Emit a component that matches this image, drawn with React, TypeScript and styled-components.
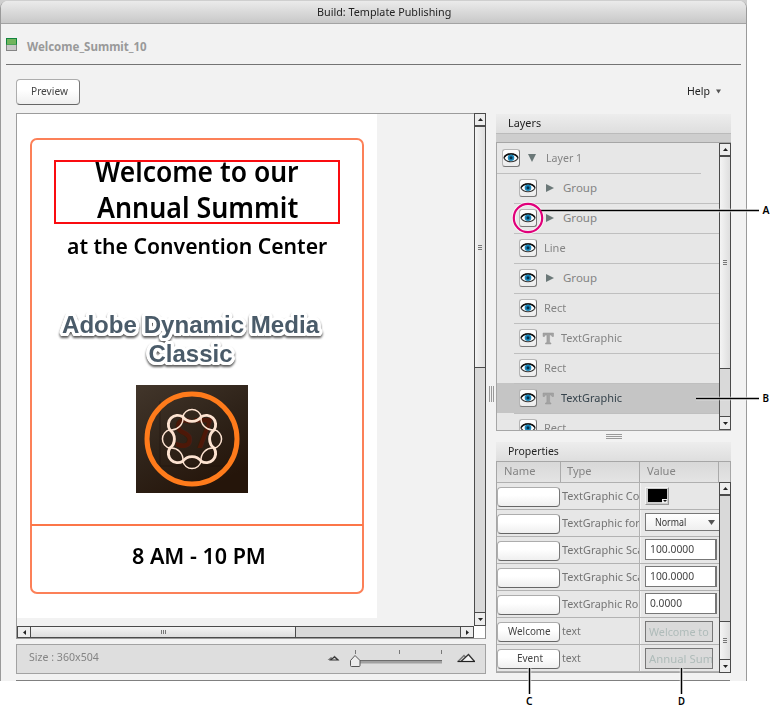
import React, { useLayoutEffect, useRef } from 'react';
import styled, { createGlobalStyle, css } from 'styled-components';

const GlobalStyle = createGlobalStyle`
  *, *::before, *::after { box-sizing: border-box; }
  body { margin: 0; background: #fff; overflow: hidden; }
`;

const UI_FONT = '"Noto Sans", "Open Sans", sans-serif';

/* ---------- text whose glyphs are condensed to a given width ---------- */

const FitBox = styled.span`
  display: inline-block;
  flex: none;
  white-space: pre;
  text-align: left;
`;
const FitInner = styled.span`
  display: inline-block;
  transform-origin: 0 50%;
`;

function Fit({ w, children }: { w: number; children: string }) {
  const ref = useRef<HTMLSpanElement>(null);
  useLayoutEffect(() => {
    const el = ref.current;
    if (el) el.style.transform = `scaleX(${w / el.offsetWidth})`;
  }, [w, children]);
  return (
    <FitBox style={{ width: w }}>
      <FitInner ref={ref}>{children}</FitInner>
    </FitBox>
  );
}

/* ---------- window ---------- */

const Page = styled.div`
  position: relative;
  width: 770px;
  height: 709px;
  background: #fff;
  font: 11.5px/16px ${UI_FONT};
  color: #222;
`;
const Backdrop = styled.div`
  width: 747px;
  height: 681px;
  padding-top: 1px;
  background: #cfcfcf;
`;
const Window = styled.div`
  height: 680px;
  border: solid #9a9a9a;
  border-width: 0 1px;
  border-radius: 7px 7px 0 0;
  background: #f2f2f2;
  overflow: hidden;
  display: flex;
  flex-direction: column;
`;
const TitleBar = styled.div`
  height: 23px;
  flex: none;
  display: flex;
  justify-content: center;
  padding: 3px 0 0 21px;
  border-bottom: 1px solid #a3a3a3;
  background: linear-gradient(#ebebeb, #c8c8c8);
`;
const FileHeader = styled.div`
  height: 41px;
  flex: none;
  margin: 0 5px;
  padding: 14px 0 0;
  display: flex;
  align-items: flex-start;
  gap: 10px;
  border-bottom: 1px solid #747474;
  color: #999;
  font-weight: 700;
`;
const FileName = styled.div`
  padding-top: 1px;
`;
const StatusIcon = styled.div`
  width: 11px;
  height: 13px;
  border: 1px solid #858585;
  border-top: 0;
  background: #c9c9c9;
  &::before {
    content: '';
    display: block;
    width: 11px;
    height: 7px;
    margin-left: -1px;
    border: 1px solid #12843f;
    border-bottom-color: #4ea258;
    background: #72b55e;
  }
`;
const Toolbar = styled.div`
  height: 48px;
  flex: none;
  display: flex;
  justify-content: space-between;
  padding: 14px 24px 0 15px;
`;
const Button = styled.button<{ $w: number; $h: number }>`
  width: ${p => p.$w}px;
  height: ${p => p.$h}px;
  flex: none;
  padding: 0 0 2px 2px;
  display: flex;
  align-items: center;
  justify-content: center;
  border: 1px solid #adadad;
  border-right-color: #777;
  border-bottom: 1.5px solid #666;
  border-radius: 4px;
  background: linear-gradient(#fff 40%, #efefef);
  font: inherit;
  color: #444;
`;
const HelpMenu = styled.div`
  display: flex;
  align-items: center;
  gap: 5px;
  height: 24px;
`;
const Columns = styled.div`
  display: flex;
  flex: none;
  padding-left: 15px;
  height: 567px;
`;

/* ---------- scroll bars ---------- */

const Bar = styled.div<{ $horizontal?: boolean }>`
  display: flex;
  flex: none;
  flex-direction: ${p => (p.$horizontal ? 'row' : 'column')};
  ${p => (p.$horizontal ? 'height: 12px;' : 'width: 12px;')}
  border: 1px solid #4b4b4b;
  background: #d9d9d9;
`;
const edge = (h?: boolean) => (h ? 'width' : 'height');
const BarButton = styled.div<{ $horizontal?: boolean; $end?: boolean }>`
  ${p => edge(p.$horizontal)}: 13px;
  flex: none;
  display: flex;
  align-items: center;
  justify-content: center;
  background: #ededed;
  border: 0 solid #4b4b4b;
  ${p =>
    p.$horizontal
      ? p.$end ? 'border-left-width: 1px;' : 'border-right-width: 1px;'
      : p.$end ? 'border-top-width: 1px;' : 'border-bottom-width: 2px;'}
`;
const Thumb = styled.div<{ $horizontal?: boolean; $size: number; $leads?: boolean }>`
  ${p => edge(p.$horizontal)}: ${p => p.$size}px;
  flex: none;
  display: flex;
  align-items: center;
  justify-content: center;
  background: linear-gradient(${p => (p.$horizontal ? '180deg' : '90deg')}, #f4f4f4, #dedede);
  border: 0 solid #4b4b4b;
  ${p =>
    p.$leads
      ? 'border-top-width: 1px;'
      : p.$horizontal ? 'border-right-width: 1px;' : 'border-bottom-width: 1px;'}
`;
const Grip = styled.div<{ $vertical?: boolean; $w: number; $h: number; $c?: string }>`
  width: ${p => p.$w}px;
  height: ${p => p.$h}px;
  flex: none;
  background: repeating-linear-gradient(
    ${p => (p.$vertical ? '90deg' : '180deg')},
    ${p => p.$c || '#777'} 0 1px,
    transparent 1px 2px
  );
`;
const Spacer = styled.div`
  flex: 1;
`;

type Dir = 'up' | 'down' | 'left' | 'right';
const angles: Record<Dir, number> = { up: 0, right: 90, down: 180, left: 270 };

const ArrowSvg = styled.svg`
  flex: none;
`;

function Arrow({ dir, w = 5, h = 3, color = '#222' }: { dir: Dir; w?: number; h?: number; color?: string }) {
  const s = Math.max(w, h) + 2;
  const c = s / 2;
  return (
    <ArrowSvg width={s} height={s}>
      <path
        transform={`rotate(${angles[dir]} ${c} ${c})`}
        d={`M${c - w / 2} ${c + h / 2}L${c} ${c - h / 2}L${c + w / 2} ${c + h / 2}Z`}
        fill={color}
      />
    </ArrowSvg>
  );
}

function ScrollBar({ horizontal, thumb, atEnd }: { horizontal?: boolean; thumb: number; atEnd?: boolean }) {
  return (
    <Bar $horizontal={horizontal}>
      <BarButton $horizontal={horizontal}>
        <Arrow dir={horizontal ? 'left' : 'up'} />
      </BarButton>
      {atEnd && <Spacer />}
      <Thumb $horizontal={horizontal} $size={thumb} $leads={atEnd}>
        <Grip $vertical={horizontal} $w={horizontal ? 5 : 4} $h={horizontal ? 4 : 5} />
      </Thumb>
      {!atEnd && <Spacer />}
      <BarButton $horizontal={horizontal} $end>
        <Arrow dir={horizontal ? 'right' : 'down'} />
      </BarButton>
    </Bar>
  );
}

/* ---------- template canvas ---------- */

const LeftColumn = styled.div`
  width: 470px;
  flex: none;
`;
const CanvasFrame = styled.div`
  height: 526px;
  border: 1px solid #9c9c9c;
  border-right-color: #888;
  display: grid;
  grid-template-columns: 457px 11px;
  grid-template-rows: 512px 12px;
  background: #fff;
  & > :nth-child(2) { width: 12px; margin-top: -1px; height: 513px; }
`;
const Viewport = styled.div`
  background: #f2f2f2;
  overflow: hidden;
`;
const Artboard = styled.div`
  position: relative;
  width: 360px;
  height: 504px;
  background: #fff;
  color: #000;
  font-weight: 600;
`;
const Frame = styled.div`
  position: absolute;
  left: 13px;
  top: 24px;
  width: 334px;
  height: 456px;
  border: 2px solid #fc8058;
  border-radius: 7px;
`;
const Rule = styled.div`
  position: absolute;
  left: 14px;
  top: 410px;
  width: 332px;
  height: 2px;
  background: #fc7648;
`;
const Selection = styled.div`
  position: absolute;
  left: 37px;
  top: 46px;
  width: 286px;
  height: 64px;
  border: 2px solid #fa0c10;
`;
const Line = styled.div<{ $x: number; $y: number; $size: number }>`
  position: absolute;
  left: ${p => p.$x}px;
  top: ${p => p.$y}px;
  font-size: ${p => p.$size}px;
  line-height: 36px;
`;
const HeadlineClip = styled.div`
  position: absolute;
  left: 37px;
  top: 47px;
  width: 286px;
  height: 63px;
  overflow: hidden;
`;
const outline = Array.from({ length: 20 }, (_, i) => {
  const a = (i / 20) * Math.PI * 2;
  return `${(3.2 * Math.cos(a)).toFixed(2)}px ${(3.2 * Math.sin(a)).toFixed(2)}px 0 #fff`;
}).join(',');
const Brand = styled.div`
  position: absolute;
  left: 30px;
  top: 196px;
  width: 287px;
  display: flex;
  flex-direction: column;
  align-items: center;
  font: 700 24px/29px "Liberation Sans", Arial, sans-serif;
  color: #4a5b69;
  text-shadow: ${outline};
  filter: drop-shadow(0 2px 1px rgba(0, 0, 0, 0.65));
`;
const Logo = styled.svg`
  position: absolute;
  left: 119px;
  top: 271px;
`;

/* closed ring of eight arcs, bulging out and in by turns */
const ring = (outFirst: boolean) => {
  const point = (k: number) => {
    const t = ((k * 45 - 22.5) * Math.PI) / 180;
    return `${(56 + 24 * Math.sin(t)).toFixed(2)} ${(54 - 24 * Math.cos(t)).toFixed(2)}`;
  };
  let d = `M${point(0)}`;
  for (let k = 0; k < 8; k++) {
    const out = (k % 2 === 0) === outFirst;
    d += out ? `A9.400 9.400 0 0 1 ${point(k + 1)}` : `A11.500 11.500 0 0 0 ${point(k + 1)}`;
  }
  return d + 'Z';
};

function ProductLogo() {
  return (
    <Logo width="112" height="108" viewBox="0 0 112 108">
      <defs>
        <linearGradient id="tile" x1="0" y1="0" x2=".6" y2="1">
          <stop offset="0" stopColor="#42362b" />
          <stop offset=".55" stopColor="#2f2319" />
          <stop offset="1" stopColor="#25150a" />
        </linearGradient>
      </defs>
      <rect width="112" height="108" fill="url(#tile)" />
      <path d="M24 16V81H92" fill="none" stroke="#1c120b" strokeOpacity=".5" />
      <text x="38" y="62.500" fontFamily="Noto Sans, sans-serif" fontSize="42" fontWeight="600" fill="#4d1808" textLength="39" lengthAdjust="spacingAndGlyphs">S7</text>
      <circle cx="56" cy="54" r="45" fill="none" stroke="#ff7b1b" strokeWidth="5" />
      <path d={ring(true)} fill="none" stroke="#fde3d1" strokeWidth="1.500" />
      <path d={ring(false)} fill="none" stroke="#fde3d1" strokeWidth="2.900" strokeLinejoin="round" />
    </Logo>
  );
}

const StatusBar = styled.div`
  height: 30px;
  margin-top: 5px;
  display: flex;
  align-items: flex-start;
  border: 1px solid #a2a2a2;
  background: #dedede;
  color: #848484;
  padding: 4px 9px 0 12px;
  justify-content: space-between;
`;
const BottomRule = styled.div`
  width: 714px;
  margin-left: 15px;
  border-top: 1px solid #808080;
`;

function ZoomSlider() {
  return (
    <svg width="150" height="24">
      <path d="M1.500 11l3.500-3 1.500 1 2-2.500 4.500 4.500z" fill="#777" />
      <path d="M3 11.500l5.500-4.300 5 4.300z" fill="#333" />
      <path d="M6 10.500l2.500-1.700 2 1.700z" fill="#ddd" />
      <path d="M29.500 1v4M73.500 1v4M115.500 1v4" stroke="#777" />
      <rect x="30" y="11" width="86" height="3.500" fill="#a0a0a0" />
      <path d="M30 11.500h86" stroke="#6c6c6c" />
      <path d="M24.500 16.500v-5l4.500-5 5 5v5q0 1-1 1h-7.500q-1 0-1-1z" fill="#ededed" stroke="#555" />
      <path d="M132 12.500l6-6 4 4" fill="none" stroke="#777" strokeWidth="1.500" />
      <path d="M135 12.500l7.500-7 6 7" fill="#f5f5f5" stroke="#333" strokeWidth="1.300" />
      <path d="M131.500 12.500h17.500" stroke="#222" strokeWidth="1.200" />
    </svg>
  );
}

/* ---------- right side panels ---------- */

const Splitter = styled.div`
  width: 10px;
  flex: none;
  padding: 273px 0 0 3px;
`;
const RightColumn = styled.div`
  width: 235px;
  flex: none;
  padding-top: 1px;
`;
const PanelHeader = styled.div<{ $line?: boolean }>`
  height: ${p => (p.$line ? 20 : 19)}px;
  padding: 1px 0 0 12px;
  background: linear-gradient(#ededed, #dedede);
  ${p => p.$line && 'border-bottom: 1px solid #bbb;'}
`;
const Strip = styled.div`
  height: 8px;
  background: #cecece;
`;
const LayerPanel = styled.div`
  height: 289px;
  display: flex;
  border: 1px solid #a6a6a6;
  border-right: 0;
  background: #e7e7e7;
`;
const LayerList = styled.div`
  flex: 1;
  overflow: hidden;
`;
const LayerRow = styled.div<{ $selected?: boolean; $root?: boolean }>`
  height: 30px;
  padding-left: ${p => (p.$root ? 5 : 22)}px;
  display: flex;
  align-items: center;
  color: ${p => (p.$selected ? '#35424b' : '#848484')};
  background:
    linear-gradient(#bfbfbf, #bfbfbf) no-repeat ${p => (p.$root ? '0 0 / 0 0' : '17px 0 / 205px 1px')},
    ${p => (p.$selected ? '#c5c5c5' : 'transparent')};
  &:nth-child(2) {
    background: linear-gradient(#bfbfbf, #bfbfbf) no-repeat 0 0 / 204px 1px;
  }
`;
const EyeButton = styled.div`
  width: 18px;
  height: 18px;
  flex: none;
  border: 1px solid #b5b5b5;
  border-right-color: #777;
  border-bottom-color: #777;
  border-radius: 3px;
  background: linear-gradient(#fff, #ebebeb);
  svg { display: block; }
`;
const Slot = styled.div<{ $w: number }>`
  width: ${p => p.$w}px;
  flex: none;
  display: flex;
  align-items: center;
`;

function Eye() {
  return (
    <EyeButton>
      <svg width="16" height="16">
        <path d="M1 8C3.500 2.500 12.500 2.500 15 8C12.500 13 3.500 13 1 8Z" fill="#fff" stroke="#333" strokeWidth="1.100" />
        <path d="M1 7.500C3.500 2.800 12.500 2.800 15 7.500" fill="none" stroke="#111" strokeWidth="1.400" />
        <circle cx="8" cy="7.800" r="3.300" fill="#1c86b8" />
        <circle cx="8" cy="7.800" r="1.500" fill="#06304b" />
      </svg>
    </EyeButton>
  );
}

function TextGlyph() {
  return (
    <svg width="13" height="13">
      <path d="M1 1H11.500V4.500H10L9.300 3H7.600V10.500L9 11V12H3.500V11L4.900 10.500V3H3.200L2.500 4.500H1Z" fill="#a3a3a3" stroke="#959595" strokeWidth=".5" />
    </svg>
  );
}

type Kind = 'root' | 'group' | 'text' | 'shape';
const layers: { kind: Kind; name: string; w: number; selected?: boolean }[] = [
  { kind: 'root', name: 'Layer 1', w: 36 },
  { kind: 'group', name: 'Group', w: 34 },
  { kind: 'group', name: 'Group', w: 34 },
  { kind: 'shape', name: 'Line', w: 22 },
  { kind: 'group', name: 'Group', w: 34 },
  { kind: 'shape', name: 'Rect', w: 22 },
  { kind: 'text', name: 'TextGraphic', w: 61 },
  { kind: 'shape', name: 'Rect', w: 22 },
  { kind: 'text', name: 'TextGraphic', w: 61, selected: true },
  { kind: 'shape', name: 'Rect', w: 22 },
];
const leadWidth: Record<Kind, number> = { root: 7, group: 8, text: 5, shape: 7 };
const slotWidth: Record<Kind, number> = { root: 26, group: 26, text: 24, shape: 7 };

function Layer({ kind, name, w, selected }: (typeof layers)[number]) {
  return (
    <LayerRow $root={kind === 'root'} $selected={selected}>
      <Eye />
      <Slot $w={leadWidth[kind]} />
      <Slot $w={slotWidth[kind] - leadWidth[kind]}>
        {kind === 'root' && <Arrow dir="down" w={8} h={8} color="#6b7878" />}
        {kind === 'group' && <Arrow dir="right" w={8} h={8} color="#6b7878" />}
        {kind === 'text' && <TextGlyph />}
      </Slot>
      <Fit w={w}>{name}</Fit>
    </LayerRow>
  );
}

const PanelSplitter = styled.div`
  height: 11px;
  padding: 3px 0 0 110px;
`;
const PropertyTable = styled.div`
  height: 212px;
  border: 1px solid #a6a6a6;
  border-bottom-width: 2px;
  background: #e7e7e7;
`;
const columns = css`
  display: grid;
  grid-template-columns: 64px 79px 79px 11px;
`;
const TableHead = styled.div`
  ${columns}
  height: 21px;
  border-bottom: 1px solid #b0b0b0;
  background: linear-gradient(#d8d8d8, #e4e4e4);
  color: #848484;
`;
const HeadCell = styled.div<{ $pad: number }>`
  padding: 1px 0 0 ${p => p.$pad}px;
  border-right: 1px solid #aaa;
`;
const TableBody = styled.div`
  height: 190px;
  display: flex;
  & > :last-child { margin-top: -1px; }
`;
const Rows = styled.div`
  width: 222px;
  flex: none;
  overflow: hidden;
`;
const PropertyRow = styled.div`
  display: grid;
  grid-template-columns: 64px 79px 79px;
  height: 27px;
  border-bottom: 1px solid #b2b2b2;
  color: #747474;
`;
const NameCell = styled.div`
  padding-top: 4px;
`;
const TypeCell = styled.div`
  overflow: hidden;
  padding: 5px 0 0 1px;
  border-right: 1px solid #b2b2b2;
`;
const ValueCell = styled.div`
  padding: 2px 0 0 4px;
  border-left: 1px solid #f4f4f4;
  overflow: hidden;
`;
const Input = styled.div<{ $disabled?: boolean }>`
  width: ${p => (p.$disabled ? 68 : 72)}px;
  height: 21px;
  padding: 1px 0 0 4px;
  border: 1px solid #777;
  overflow: hidden;
  ${p =>
    p.$disabled
      ? 'margin-top: 1px; border-width: 1.5px; padding: 2px 0 0 3px; background: #dadada; color: #aebbb9;'
      : 'border-right: 2px solid #777; background: #fff; color: #444;'}
`;
const Select = styled.div`
  width: 75px;
  height: 18px;
  margin-top: 1px;
  padding: 0 4px 0 9px;
  display: flex;
  align-items: center;
  justify-content: space-between;
  border: 1px solid #777;
  border-right: 0;
  background: linear-gradient(#fff, #efefef);
  font-size: 10px;
  color: #333;
`;
const Swatch = styled.div`
  width: 24px;
  height: 18px;
  margin-top: 2px;
  padding: 1px;
  border: 1px solid #f4f4f4;
  border-right-color: #999;
  border-bottom-color: #999;
  background: #ccc;
  svg { display: block; }
`;

type Value = 'color' | 'select' | 'input' | 'disabled';
const properties: { name?: string; nw?: number; type: string; w: number; kind: Value; value?: string; vw?: number }[] = [
  { type: 'TextGraphic Co', w: 77, kind: 'color' },
  { type: 'TextGraphic for', w: 78, kind: 'select', value: 'Normal', vw: 31 },
  { type: 'TextGraphic Sca', w: 81, kind: 'input', value: '100.0000', vw: 44 },
  { type: 'TextGraphic Sca', w: 81, kind: 'input', value: '100.0000', vw: 44 },
  { type: 'TextGraphic Ro', w: 76, kind: 'input', value: '0.0000', vw: 32 },
  { name: 'Welcome', nw: 43, type: 'text', w: 19, kind: 'disabled', value: 'Welcome to', vw: 60 },
  { name: 'Event', nw: 26, type: 'text', w: 19, kind: 'disabled', value: 'Annual Sum', vw: 64 },
];

function PropertyValue({ kind, value = '', vw = 0 }: (typeof properties)[number]) {
  if (kind === 'color')
    return (
      <Swatch>
        <svg width="20" height="14">
          <rect x="1" width="19" height="13" fill="#000" />
          <path d="M15 10h5v4h-5z" fill="#eee" />
          <path d="M16 11h4l-2 2z" fill="#111" />
        </svg>
      </Swatch>
    );
  if (kind === 'select')
    return (
      <Select>
        <Fit w={vw}>{value}</Fit>
        <Arrow dir="down" w={7} h={5} color="#555" />
      </Select>
    );
  return (
    <Input $disabled={kind === 'disabled'}>
      <Fit w={vw}>{value}</Fit>
    </Input>
  );
}

/* ---------- callouts ---------- */

const Callouts = styled.svg`
  position: absolute;
  left: 0;
  top: 0;
  pointer-events: none;
  text { font: 600 11.5px ${UI_FONT}; fill: #000; }
`;
const calloutPath = 'M541 210.500H759M696 398.500H759M529.500 668V694M681.500 668V694';

export default function App() {
  return (
    <Page>
      <GlobalStyle />
      <Backdrop>
        <Window>
          <TitleBar><Fit w={134}>Build: Template Publishing</Fit></TitleBar>
          <FileHeader>
            <StatusIcon />
            <FileName><Fit w={120}>Welcome_Summit_10</Fit></FileName>
          </FileHeader>
          <Toolbar>
            <Button $w={64} $h={26}><Fit w={37}>Preview</Fit></Button>
            <HelpMenu><Fit w={23}>Help</Fit><Arrow dir="down" w={5} h={4} color="#555" /></HelpMenu>
          </Toolbar>
          <Columns>
            <LeftColumn>
              <CanvasFrame>
                <Viewport>
                  <Artboard>
                    <Frame />
                    <Rule />
                    <HeadlineClip>
                      <Line $x={41} $y={-8} $size={28}><Fit w={204}>Welcome to our</Fit></Line>
                      <Line $x={43} $y={28} $size={28}><Fit w={201}>Annual Summit</Fit></Line>
                    </HeadlineClip>
                    <Selection />
                    <Line $x={50} $y={114} $size={21.5}><Fit w={260}>at the Convention Center</Fit></Line>
                    <Brand>
                      <Fit w={257}>Adobe Dynamic Media</Fit>
                      <Fit w={84}>Classic</Fit>
                    </Brand>
                    <ProductLogo />
                    <Line $x={115} $y={423} $size={22}><Fit w={134}>8 AM - 10 PM</Fit></Line>
                  </Artboard>
                </Viewport>
                <ScrollBar thumb={241} />
                <ScrollBar horizontal thumb={265} />
              </CanvasFrame>
              <StatusBar>
                <Fit w={70}>Size : 360x504</Fit>
                <ZoomSlider />
              </StatusBar>
            </LeftColumn>
            <Splitter><Grip $vertical $w={5} $h={16} $c="#999" /></Splitter>
            <RightColumn>
              <PanelHeader $line><Fit w={33}>Layers</Fit></PanelHeader>
              <Strip />
              <LayerPanel>
                <LayerList>{layers.map((l, i) => <Layer key={i} {...l} />)}</LayerList>
                <ScrollBar thumb={212} />
              </LayerPanel>
              <PanelSplitter><Grip $w={16} $h={5} $c="#999" /></PanelSplitter>
              <PanelHeader><Fit w={51}>Properties</Fit></PanelHeader>
              <PropertyTable>
                <TableHead>
                  <HeadCell $pad={7}><Fit w={31}>Name</Fit></HeadCell>
                  <HeadCell $pad={6}><Fit w={25}>Type</Fit></HeadCell>
                  <HeadCell $pad={7}><Fit w={29}>Value</Fit></HeadCell>
                </TableHead>
                <TableBody>
                  <Rows>
                    {properties.map((p, i) => (
                      <PropertyRow key={i}>
                        <NameCell>
                          <Button $w={63} $h={20}>{p.name ? <Fit w={p.nw!}>{p.name}</Fit> : null}</Button>
                        </NameCell>
                        <TypeCell><Fit w={p.w}>{p.type}</Fit></TypeCell>
                        <ValueCell><PropertyValue {...p} /></ValueCell>
                      </PropertyRow>
                    ))}
                  </Rows>
                  <ScrollBar thumb={38} atEnd />
                </TableBody>
              </PropertyTable>
            </RightColumn>
          </Columns>
          <BottomRule />
        </Window>
      </Backdrop>
      <Callouts width="770" height="709">
        <path d={calloutPath} stroke="#fff" strokeOpacity=".7" strokeWidth="3.500" />
        <circle cx="528" cy="218" r="14.200" fill="none" stroke="#fff" strokeOpacity=".7" strokeWidth="4" />
        <path d={calloutPath} stroke="#000" strokeWidth="1.500" />
        <circle cx="528" cy="218" r="14.200" fill="none" stroke="#e0007a" strokeWidth="2.200" />
        <text x="762.500" y="214" textLength="7" lengthAdjust="spacingAndGlyphs">A</text>
        <text x="762.500" y="402" textLength="6.500" lengthAdjust="spacingAndGlyphs">B</text>
        <text x="526" y="705" textLength="6.500" lengthAdjust="spacingAndGlyphs">C</text>
        <text x="678" y="705" textLength="7" lengthAdjust="spacingAndGlyphs">D</text>
      </Callouts>
    </Page>
  );
}
